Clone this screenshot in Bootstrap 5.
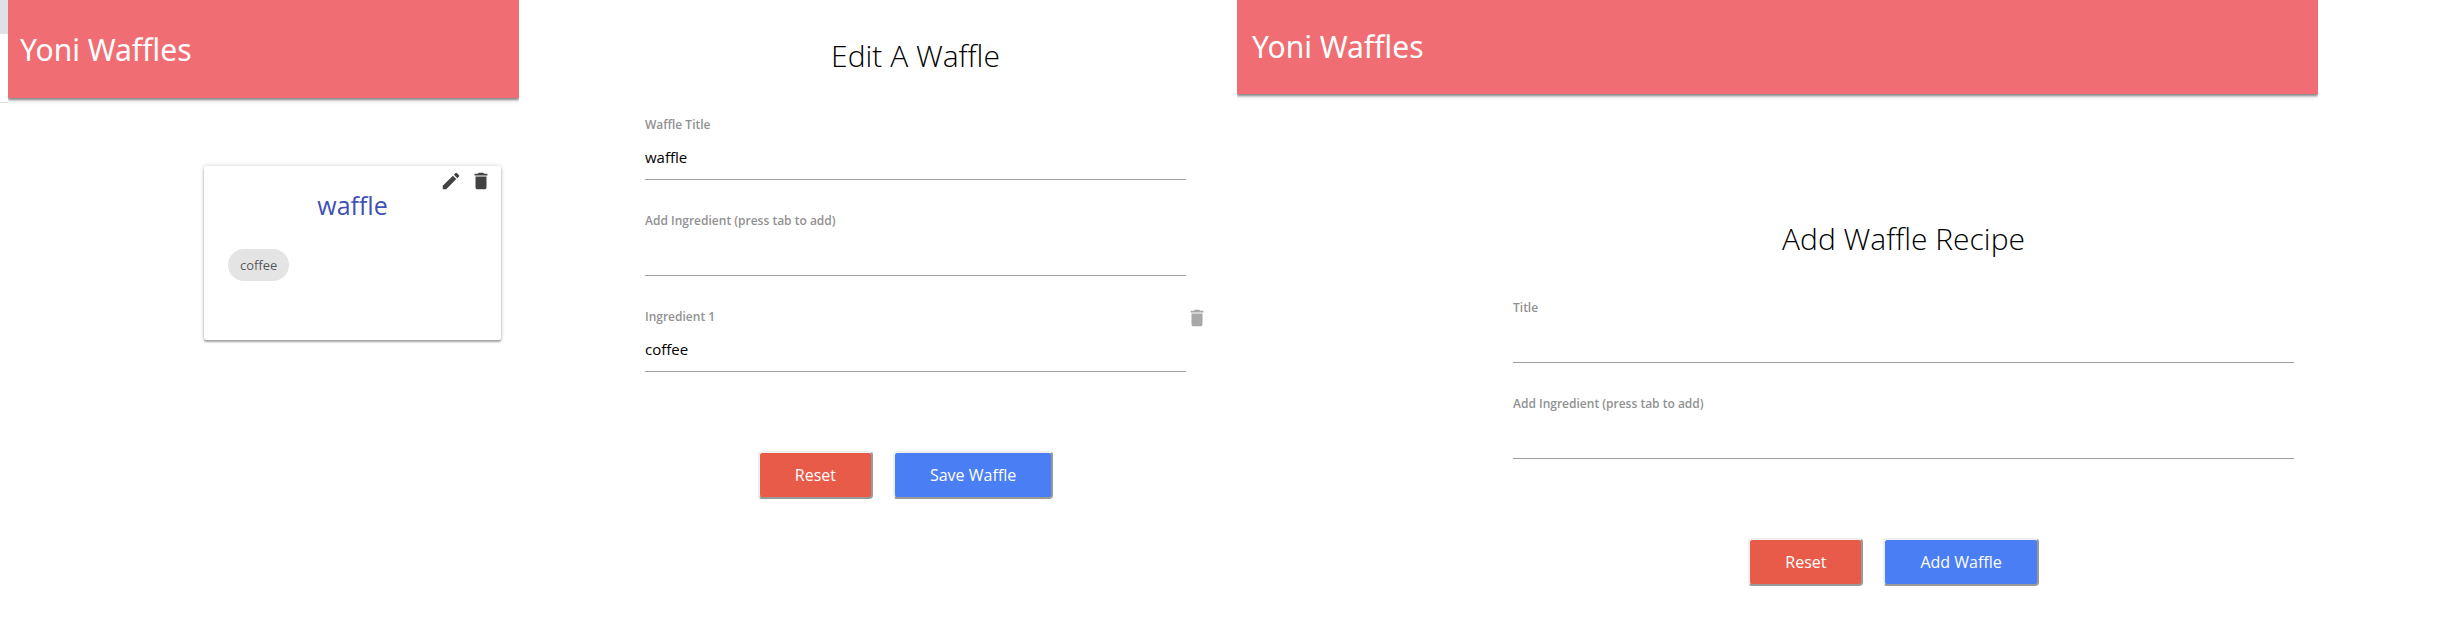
<!DOCTYPE html>
<html lang="en">
<head>
<meta charset="utf-8">
<meta name="viewport" content="width=device-width, initial-scale=1">
<title>Yoni Waffles</title>
<link href="https://cdn.jsdelivr.net/npm/bootstrap@5.3.0/dist/css/bootstrap.min.css" rel="stylesheet">
<style>
body { font-family: "Open Sans", "Noto Sans", sans-serif; background: #fff; color: #212121; }
.board { display: grid; grid-template-columns: 8px 511fr 718fr 1081fr 126fr; min-height: 100vh; }
.edge-top { height: 34px; background: #dee1e6; }
.edge-bottom { height: 69px; border-bottom: 1px solid #dadce0; }
.brandbar { background: #f06e73; color: #fff; box-shadow: 0 2px 2px rgba(0,0,0,.4), 0 3px 5px rgba(0,0,0,.12); clip-path: inset(0 0 -12px 0); padding: 30px 12px 28px; }
.brandbar.wide { padding: 27px 15px; }
.brandbar a { display: block; color: #fff; text-decoration: none; font-family: "Noto Sans", sans-serif; font-size: 30px; line-height: 40px; }
.waffle-card { margin: 68px 18px 0 196px; padding: 4px 9px 59px 24px; border-radius: 2px; box-shadow: 0 2px 2px rgba(0,0,0,.3), 0 0 4px rgba(0,0,0,.2); }
.waffle-card h2 { margin: 0 0 31px -15px; font-size: 25px; line-height: 26px; font-weight: 400; color: #3f51b5; }
.tag { display: inline-block; height: 32px; line-height: 32px; padding: 0 12px; border-radius: 16px; background: #e4e4e4; color: rgba(0,0,0,.65); font-size: 13px; }
.iconbtn { border: 0; padding: 0; background: none; color: #424242; width: 22px; height: 22px; display: flex; align-items: center; justify-content: center; }
.iconbtn svg { width: 22px; height: 22px; flex: none; fill: currentColor; }
.field .iconbtn { height: 18px; color: #a8a8a8; }
.edit-form { margin: 36px 51px 0 126px; }
.add-form { margin: 125px 24px 0 276px; }
.form-title { font-size: 30px; line-height: 40px; font-weight: 300; margin: 0 0 41px; color: #000; }
.field { margin-bottom: 33px; }
.field label { display: block; font-size: 12px; line-height: 16px; font-weight: 600; color: #919191; }
.field input { display: block; width: 100%; height: 47px; padding: 2px 0 0; border: 0; border-bottom: 1px solid #9e9e9e; border-radius: 0; background: none; color: #000; font-size: 15px; outline: 0; }
.actions { margin-top: 79px; }
.actions .btn { margin-right: 20px; height: 48px; padding: 0 35px; border: 2px solid; border-color: #efefef #999 #999 #efefef; border-radius: 4px; font-size: 16px; line-height: 24px; color: #fff; }
.btn-reset, .btn-reset:hover { background: #e85b48; }
.btn-save, .btn-save:hover { background: #4a7ef5; }
</style>
</head>
<body>
<svg class="d-none" aria-hidden="true">
  <symbol id="pencil" viewBox="0 0 24 24"><path d="M3 17.25V21h3.75L17.81 9.94l-3.75-3.75L3 17.25zM20.71 7.04a1 1 0 0 0 0-1.41l-2.34-2.34a1 1 0 0 0-1.41 0l-1.83 1.83 3.75 3.75 1.83-1.83z"/></symbol>
  <symbol id="trash" viewBox="0 0 24 24"><path d="M6 19c0 1.1.9 2 2 2h8c1.1 0 2-.9 2-2V7H6v12zM19 4h-3.500l-1-1h-5l-1 1H5v2h14V4z"/></symbol>
</svg>
<div class="board">
  <div>
    <div class="edge-top"></div>
    <div class="edge-bottom"></div>
  </div>

  <section>
    <header class="brandbar"><a href="#">Yoni Waffles</a></header>
    <article class="waffle-card">
      <div class="d-flex justify-content-end gap-2">
        <button class="iconbtn" type="button" aria-label="Edit"><svg><use href="#pencil"/></svg></button>
        <button class="iconbtn" type="button" aria-label="Delete"><svg><use href="#trash"/></svg></button>
      </div>
      <h2 class="text-center">waffle</h2>
      <div class="d-flex"><span class="tag">coffee</span></div>
    </article>
  </section>

  <section>
    <form class="edit-form">
      <h1 class="form-title text-center">Edit A Waffle</h1>
      <div class="field">
        <label for="waffle-title">Waffle Title</label>
        <input id="waffle-title" type="text" value="waffle">
      </div>
      <div class="field">
        <label for="edit-add">Add Ingredient (press tab to add)</label>
        <input id="edit-add" type="text">
      </div>
      <div class="field position-relative">
        <label for="ingredient-1">Ingredient 1</label>
        <input id="ingredient-1" type="text" value="coffee">
        <button class="iconbtn position-absolute top-0 start-100" type="button" aria-label="Remove ingredient"><svg><use href="#trash"/></svg></button>
      </div>
      <div class="actions d-flex justify-content-center">
        <button class="btn btn-reset" type="button">Reset</button>
        <button class="btn btn-save" type="button">Save Waffle</button>
      </div>
    </form>
  </section>

  <section>
    <header class="brandbar wide"><a href="#">Yoni Waffles</a></header>
    <form class="add-form">
      <h1 class="form-title text-center">Add Waffle Recipe</h1>
      <div class="field">
        <label for="new-title">Title</label>
        <input id="new-title" type="text">
      </div>
      <div class="field">
        <label for="new-add">Add Ingredient (press tab to add)</label>
        <input id="new-add" type="text">
      </div>
      <div class="actions d-flex justify-content-center">
        <button class="btn btn-reset" type="button">Reset</button>
        <button class="btn btn-save" type="button">Add Waffle</button>
      </div>
    </form>
  </section>
</div>
<script src="https://cdn.jsdelivr.net/npm/bootstrap@5.3.0/dist/js/bootstrap.bundle.min.js"></script>
</body>
</html>
